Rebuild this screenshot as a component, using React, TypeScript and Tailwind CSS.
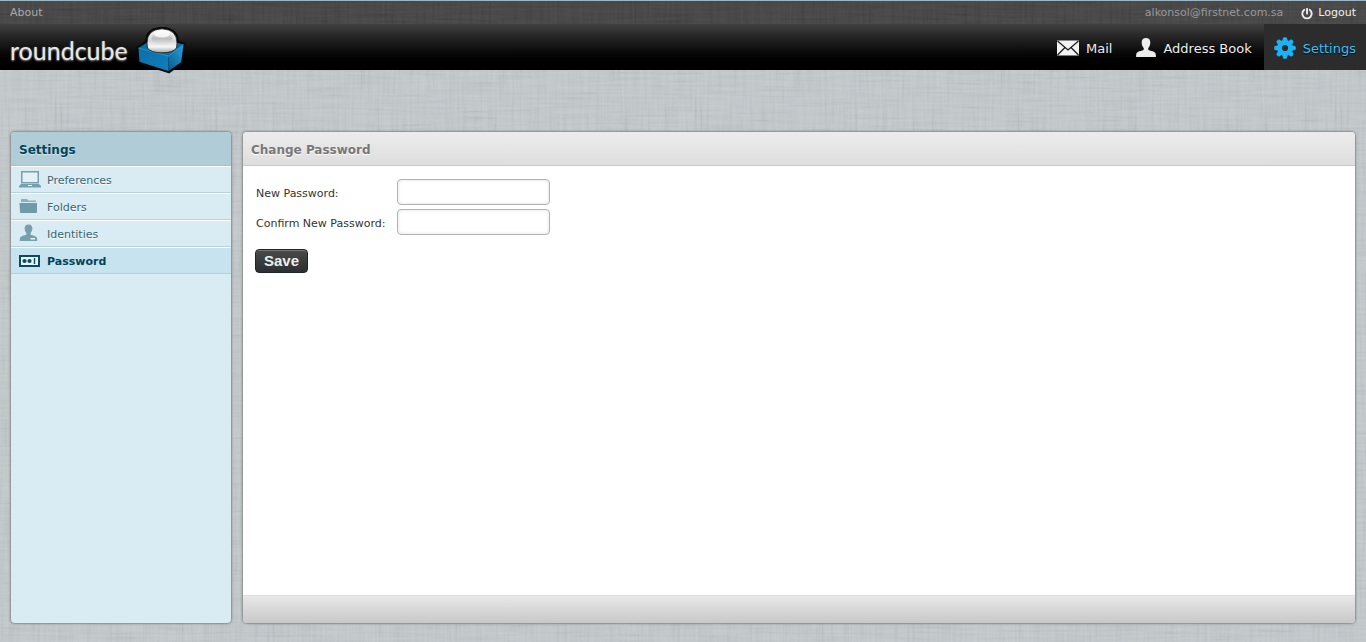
import type { ReactNode } from "react";

function Linen({ id, strength, frequency }: { id: string; strength: string; frequency: number }) {
  return (
    <svg className={`pointer-events-none absolute inset-0 -z-10 h-full w-full ${strength}`} aria-hidden="true">
      <filter id={`${id}-v`} x="0" y="0" width="100%" height="100%">
        <feTurbulence type="fractalNoise" baseFrequency={`${frequency} 0.02`} numOctaves={2} seed={3} />
        <feColorMatrix type="matrix" values="1.6 0 0 0 -0.3  1.6 0 0 0 -0.3  1.6 0 0 0 -0.3  0 0 0 0 1" />
      </filter>
      <filter id={`${id}-h`} x="0" y="0" width="100%" height="100%">
        <feTurbulence type="fractalNoise" baseFrequency={`0.02 ${frequency}`} numOctaves={2} seed={8} />
        <feColorMatrix type="matrix" values="1.6 0 0 0 -0.3  1.6 0 0 0 -0.3  1.6 0 0 0 -0.3  0 0 0 0 1" />
      </filter>
      <rect width="100%" height="100%" filter={`url(#${id}-v)`} />
      <rect width="100%" height="100%" filter={`url(#${id}-h)`} opacity="0.5" />
    </svg>
  );
}

function LogoCube() {
  return (
    <svg className="absolute left-[135px] top-[2px] h-[48px] w-[52px]" viewBox="135 26 52 48" aria-hidden="true">
      <defs>
        <linearGradient id="cubeFront" x1="0" y1="0" x2="1" y2="1">
          <stop offset="0" stopColor="#0d6ea6" />
          <stop offset="1" stopColor="#0e80bd" />
        </linearGradient>
        <linearGradient id="cubeSide" x1="1" y1="0" x2="0" y2="1">
          <stop offset="0" stopColor="#2ba0d8" />
          <stop offset="1" stopColor="#055a8e" />
        </linearGradient>
        <linearGradient id="ball" x1="0" y1="0" x2="0" y2="1">
          <stop offset="0" stopColor="#fafafa" />
          <stop offset="0.5" stopColor="#d6d6d6" />
          <stop offset="0.75" stopColor="#f6f6f6" />
          <stop offset="1" stopColor="#a4a4a4" />
        </linearGradient>
        <linearGradient id="ballInner" x1="0" y1="0" x2="0" y2="1">
          <stop offset="0" stopColor="#f4f4f4" />
          <stop offset="0.5" stopColor="#bdbdbd" />
          <stop offset="1" stopColor="#ededed" />
        </linearGradient>
      </defs>
      <path
        d="M137 47.500 L145.500 41.500 Q146 28 162 27.500 Q178 28 178.500 41.500 L185 43.500 L182.500 63 L169 72.800 L138 63 Z"
        fill="#05090c"
        stroke="#05090c"
        strokeWidth="1.200"
        strokeLinejoin="round"
      />
      <path d="M138.500 48 L147 42.500 L178 43 L183.500 44.500 L168.500 57 Z" fill="#0b6ba3" />
      <path d="M138.500 48 L168.500 56 L168.500 71 L139.500 61.800 Z" fill="url(#cubeFront)" />
      <path d="M168.500 56 L183.500 44.500 L181.200 62 L168.500 71 Z" fill="url(#cubeSide)" />
      <path d="M138.500 48 L168.500 56 L183.500 44.500" fill="none" stroke="#3aa5db" strokeWidth="0.700" />
      <path
        d="M147 43 Q147 29.500 162 28.800 Q177 29.500 177 43 L176.500 48 Q173 52.800 162 52.800 Q151 52.800 147.500 48 Z"
        fill="url(#ball)"
        stroke="#1c1c1c"
        strokeWidth="0.800"
      />
      <ellipse cx="162" cy="38.500" rx="10.500" ry="7" fill="url(#ballInner)" />
      <ellipse cx="162" cy="34" rx="8" ry="3.500" fill="#ffffff" opacity="0.750" />
    </svg>
  );
}

function MailIcon() {
  return (
    <svg className="h-[16px] w-[22px]" viewBox="0 0 22 16" aria-hidden="true">
      <rect width="22" height="15" y="0.5" fill="#f2f2f2" />
      <path d="M0.5 1 L11 10 L21.5 1 M0.5 15 L8 7.5 M21.5 15 L14 7.5" fill="none" stroke="#161616" strokeWidth="1.2" />
    </svg>
  );
}

function PersonIcon() {
  return (
    <svg className="h-[20px] w-[20px]" viewBox="0 0 20 20" aria-hidden="true">
      <path
        d="M10 0c3 0 4.400 2 4.300 4.800-.1 2.200-.9 4-2 5.100-.3.900 0 1.900.7 2.300 3.600.9 6 1.500 6.600 3.300.3 1 .3 2.500.3 3.500H.1c0-1 0-2.500.3-3.500C1 13.700 3.400 13.100 7 12.200c.7-.4 1-1.400.7-2.300-1.100-1.100-1.900-2.900-2-5.100C5.600 2 7 0 10 0z"
        fill="#ececec"
      />
    </svg>
  );
}

function GearIcon() {
  const teeth = [0, 45, 90, 135, 180, 225, 270, 315];
  return (
    <svg className="h-[22px] w-[22px]" viewBox="0 0 22 22" aria-hidden="true">
      {teeth.map((angle) => (
        <path key={angle} d="M8.300 4 L9.200 0.500 Q11 -0.100 12.800 0.500 L13.700 4 Z" fill="#1eb2f5" transform={`rotate(${angle} 11 11)`} />
      ))}
      <circle cx="11" cy="11" r="5.500" fill="none" stroke="#1eb2f5" strokeWidth="4.800" />
    </svg>
  );
}

function PowerIcon() {
  return (
    <svg className="h-[12px] w-[12px]" viewBox="0 0 12 12" aria-hidden="true">
      <path d="M3.300 1.800 A4.700 4.700 0 1 0 8.700 1.800" fill="none" stroke="#ececec" strokeWidth="1.900" strokeLinecap="round" />
      <path d="M6 0.800 V5.500" stroke="#ececec" strokeWidth="1.900" strokeLinecap="round" />
    </svg>
  );
}

function LaptopIcon() {
  return (
    <svg className="h-[18px] w-[22px]" viewBox="0 0 22 18" aria-hidden="true">
      <rect x="2.750" y="1.750" width="16.500" height="11" fill="#e3f0f5" stroke="#76a0ad" strokeWidth="1.500" />
      <path d="M2 14 H20 L22 16 V17.500 H0 V16 Z" fill="#76a0ad" />
      <rect x="9" y="15" width="4" height="1" fill="#ffffff" />
    </svg>
  );
}

function FolderIcon() {
  return (
    <svg className="h-[18px] w-[22px]" viewBox="0 0 22 18" aria-hidden="true">
      <path d="M2 2.500 Q2 2 2.500 2 H8 L9.500 3.500 H17 V5 H2 Z" fill="#8db1bc" />
      <path d="M0.500 6 H18 V15 Q18 16 17 16 H2 Q1 16 1 15 Z" fill="#6f9ba8" />
    </svg>
  );
}

function IdentityIcon() {
  return (
    <svg className="h-[18px] w-[22px]" viewBox="0 0 22 18" aria-hidden="true">
      <path
        d="M9.500 0.500c2.700 0 4 1.700 3.900 4-.1 1.900-.8 3.400-1.700 4.400-.2.800 0 1.700.6 2.100 3.200.8 5.300 1.400 5.700 3 .2.900.2 2 .2 3H.8c0-1 0-2.100.2-3 .4-1.600 2.500-2.200 5.700-3 .6-.4.800-1.300.6-2.100-.9-1-1.600-2.500-1.700-4.400C5.500 2.200 6.800.5 9.500.5z"
        fill="#76a0ad"
      />
      <rect x="11.500" y="14" width="4.500" height="1.500" fill="#e8f4f8" />
    </svg>
  );
}

function PasswordIcon() {
  return (
    <svg className="h-[18px] w-[22px]" viewBox="0 0 22 18" aria-hidden="true">
      <rect x="1" y="5" width="19" height="10" fill="#e8f4f8" stroke="#0c4a60" strokeWidth="2" />
      <circle cx="5.500" cy="10" r="2.100" fill="#0c4a60" />
      <circle cx="10.500" cy="10" r="2.100" fill="#0c4a60" />
      <path d="M15.500 7 V13" stroke="#0c4a60" strokeWidth="1.400" />
    </svg>
  );
}

function NavLink({ icon, label, active = false }: { icon: ReactNode; label: string; active?: boolean }) {
  return (
    <a
      href="#"
      className={
        active
          ? "flex items-center gap-[7px] bg-[#2c2c2c] px-2.5 pt-0.5 text-[13px] text-[#35c3f8] [text-shadow:0_1px_1px_#000]"
          : "flex items-center gap-[7px] px-3 pt-0.5 text-[13px] text-[#eeeeee] [text-shadow:0_1px_1px_#000]"
      }
    >
      {icon}
      <span className="pt-0.5">{label}</span>
    </a>
  );
}

const sections = [
  { label: "Preferences", icon: <LaptopIcon />, active: false },
  { label: "Folders", icon: <FolderIcon />, active: false },
  { label: "Identities", icon: <IdentityIcon />, active: false },
  { label: "Password", icon: <PasswordIcon />, active: true },
];

function PasswordRow({ id, label }: { id: string; label: string }) {
  return (
    <>
      <label htmlFor={id} className="whitespace-nowrap pt-1 text-[#333333]">
        {label}
      </label>
      <input
        id={id}
        type="password"
        className="h-[26px] w-[153px] rounded border border-[#b2b2b2] bg-white px-1.5 shadow-[inset_0_0_3px_1px_#ececec] outline-none focus:border-[#4fade0]"
      />
    </>
  );
}

const PANEL = "flex flex-col overflow-hidden rounded shadow-[0_0_2px_1px_#888888]";

export default function App() {
  return (
    <div className="relative isolate flex min-h-screen flex-col bg-[#c3c9cc] font-['DejaVu_Sans',Verdana,sans-serif] text-[11px]">
      <Linen id="page" strength="opacity-[0.09]" frequency={0.4} />
      <div className="relative isolate flex h-6 items-center justify-between border-t border-[#9db6c4] bg-[#404040] px-2.5 pt-0.5">
        <Linen id="bar" strength="opacity-[0.08]" frequency={0.4} />
        <a href="#" className="text-[#aaaaaa]">
          About
        </a>
        <div className="flex items-center gap-[18px]">
          <span className="text-[#999999]">alkonsol@firstnet.com.sa</span>
          <a href="#" className="flex items-center gap-[5px] text-[#f0f0f0]">
            <PowerIcon />
            Logout
          </a>
        </div>
      </div>

      <header className="flex h-[46px] justify-between bg-linear-to-b from-[#404040] to-black">
        <a href="#" className="relative flex items-center pl-2.5 pt-1.5">
          <span className="font-['Lato',sans-serif] text-[25px] leading-8 text-[#e8e8e8] [text-shadow:0_1px_2px_#999999]">roundcube</span>
          <LogoCube />
        </a>
        <nav className="flex">
          <NavLink icon={<MailIcon />} label="Mail" />
          <NavLink icon={<PersonIcon />} label="Address Book" />
          <NavLink icon={<GearIcon />} label="Settings" active />
        </nav>
      </header>

      <main className="flex flex-1 gap-3 px-[11px] pb-[19px] pt-[62px]">
        <aside className={`w-[220px] shrink-0 bg-[#d9ecf4] ${PANEL}`}>
          <h2 className="flex h-[34px] items-center border-b border-[#a2c3ce] bg-[#b0ccd7] px-2 pt-0.5 text-[12px] font-bold text-[#004458] [text-shadow:0_1px_1px_#d9ecf4]">
            Settings
          </h2>
          <nav>
            {sections.map(({ label, icon, active }) => (
              <a
                key={label}
                href="#"
                className={
                  active
                    ? "flex h-[27px] items-center gap-1.5 border-b border-t border-b-[#b0d0dc] border-t-white bg-[#c7e3ef] px-2 pb-0.5 font-bold text-[#004458]"
                    : "flex h-[27px] items-center gap-1.5 border-b border-t border-b-[#b8d3dd] border-t-white px-2 pb-0.5 text-[#376572] [text-shadow:0_1px_1px_#ffffff]"
                }
              >
                {icon}
                <span className="pt-1.5">{label}</span>
              </a>
            ))}
          </nav>
        </aside>

        <section className={`min-w-0 flex-1 bg-white ${PANEL}`}>
          <h1 className="flex h-[34px] items-center border-b border-[#c8c8c8] bg-linear-to-b from-[#ececec] to-[#dedede] px-2 pt-0.5 text-[12px] font-bold text-[#777777] [text-shadow:0_1px_1px_#ffffff]">
            Change Password
          </h1>
          <form className="flex-1 px-[13px] pt-[13px]" onSubmit={(event) => event.preventDefault()}>
            <div className="grid grid-cols-[137px_153px] items-center gap-1">
              <PasswordRow id="new-password" label="New Password:" />
              <PasswordRow id="confirm-password" label="Confirm New Password:" />
            </div>
            <button
              type="submit"
              className="-ml-px mt-3.5 h-6 rounded border border-[#1e2427] bg-linear-to-b from-[#4a4a4a] to-[#2c3032] px-2 font-['Liberation_Sans',Arial,sans-serif] text-[15px] font-bold leading-5 text-[#eeeeee] shadow-[inset_0_1px_0_#777777]"
            >
              Save
            </button>
          </form>
          <footer className="h-7 border-t border-[#dddddd] bg-linear-to-b from-[#e8e8e8] to-[#c8c8c8]" />
        </section>
      </main>
    </div>
  );
}
